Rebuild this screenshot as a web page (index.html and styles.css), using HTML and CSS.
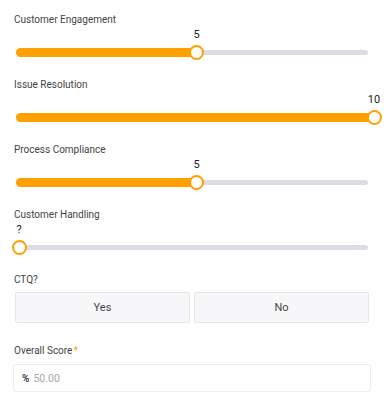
FILE: index.html
```html
<!DOCTYPE html>
<html lang="en">
<head>
  <meta charset="UTF-8" />
  <meta name="viewport" content="width=device-width, initial-scale=1.0"/>
  <title>Evaluation</title>
  <link rel="stylesheet" href="styles.css">
</head>
<body>
  <div class="form">
    <div class="field">
      <div class="field-label">Customer Engagement</div>
      <div class="slider" style="--p: 0.5">
        <span class="slider-value">5</span>
        <div class="rail">
          <div class="track"></div>
          <div class="fill"></div>
          <div class="thumb"></div>
        </div>
      </div>
    </div>

    <div class="field">
      <div class="field-label">Issue Resolution</div>
      <div class="slider" style="--p: 1">
        <span class="slider-value">10</span>
        <div class="rail">
          <div class="track"></div>
          <div class="fill"></div>
          <div class="thumb"></div>
        </div>
      </div>
    </div>

    <div class="field">
      <div class="field-label">Process Compliance</div>
      <div class="slider" style="--p: 0.5">
        <span class="slider-value">5</span>
        <div class="rail">
          <div class="track"></div>
          <div class="fill"></div>
          <div class="thumb"></div>
        </div>
      </div>
    </div>

    <div class="field">
      <div class="field-label">Customer Handling</div>
      <div class="slider" style="--p: 0">
        <span class="slider-value">?</span>
        <div class="rail">
          <div class="track"></div>
          <div class="thumb"></div>
        </div>
      </div>
    </div>

    <!-- CTQ toggle -->
    <div class="field ctq">
      <div class="field-label">CTQ?</div>
      <div class="choice">
        <button type="button">Yes</button>
        <button type="button">No</button>
      </div>
    </div>

    <div class="field">
      <div class="field-label">Overall Score<span class="req">*</span></div>
      <div class="input-box">
        <span class="unit">%</span>
        <input type="text" placeholder="50.00" />
      </div>
    </div>
  </div>
</body>
</html>
```

FILE: styles.css
```css
* {
  box-sizing: border-box;
  font-family: Roboto, "Liberation Sans", Arial, sans-serif;
}

body {
  margin: 0;
  background: #fff;
  color: #444;
}

.form {
  width: 358px;
  margin-left: 13px;
  padding-top: 12px;
}

.field {
  margin-bottom: 17px;
}

.field-label {
  padding-left: 1px;
  font-size: 10px;
  line-height: 16px;
  color: #444;
}

.slider {
  position: relative;
  margin: 0 3px;
  padding-top: 16px;
  --x: calc(3px + var(--p) * 355px);
}

.slider-value {
  position: absolute;
  top: -1px;
  left: var(--x);
  transform: translateX(-50%);
  font-size: 11px;
  line-height: 16px;
  color: #222;
}

.rail {
  position: relative;
  height: 16px;
  display: flex;
  align-items: center;
}

.track {
  width: 100%;
  height: 5px;
  border-radius: 3px;
  background: #dcdde2;
}

.fill {
  position: absolute;
  left: 0;
  top: 50%;
  width: var(--x);
  height: 9px;
  margin-top: -4.5px;
  border-radius: 5px 0 0 5px;
  background: #ffa000;
}

.thumb {
  position: absolute;
  top: 50%;
  left: var(--x);
  width: 15px;
  height: 15px;
  margin: -7.5px 0 0 -7.5px;
  border: 2px solid #ffa000;
  border-radius: 50%;
  background: #fff;
}

.ctq {
  margin-bottom: 20px;
}

.choice {
  display: grid;
  grid-template-columns: 1fr 1fr;
  gap: 4px;
  margin: 4px 2px 0;
}

.choice button {
  height: 31px;
  border: 1px solid #e6e6e8;
  border-radius: 2px;
  background: #f7f7f9;
  font-size: 11px;
  color: #444;
  cursor: pointer;
}

.req {
  color: #ffa000;
  margin-left: 1px;
}

.input-box {
  display: flex;
  align-items: center;
  height: 28px;
  margin-top: 5px;
  padding: 0 8px;
  border: 1px solid #ececee;
  border-radius: 3px;
}

.unit {
  font-size: 10px;
  font-weight: bold;
  color: #444;
  margin-right: 4px;
}

.input-box input {
  flex: 1;
  border: none;
  outline: none;
  padding: 0;
  font-size: 10.5px;
  color: #444;
}

.input-box input::placeholder {
  color: #a8a8a8;
}
```
